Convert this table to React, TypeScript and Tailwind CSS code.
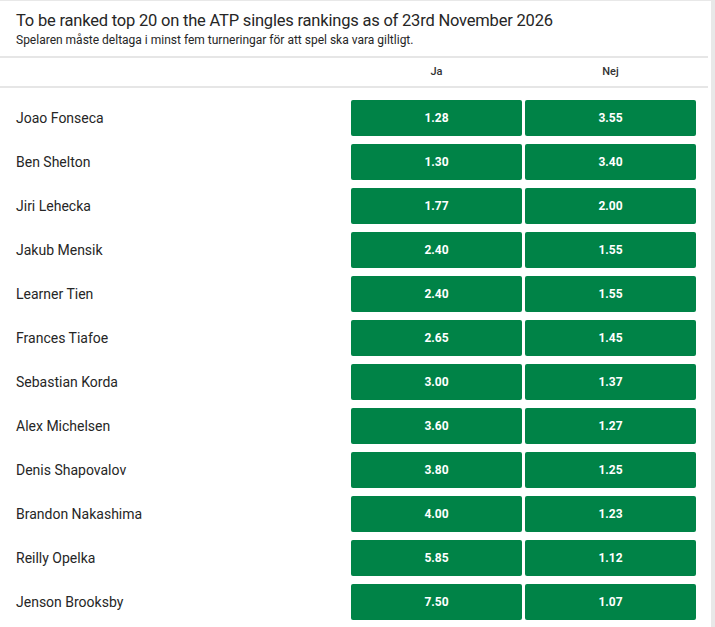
const rows: [string, string, string][] = [
  ['Joao Fonseca', '1.28', '3.55'],
  ['Ben Shelton', '1.30', '3.40'],
  ['Jiri Lehecka', '1.77', '2.00'],
  ['Jakub Mensik', '2.40', '1.55'],
  ['Learner Tien', '2.40', '1.55'],
  ['Frances Tiafoe', '2.65', '1.45'],
  ['Sebastian Korda', '3.00', '1.37'],
  ['Alex Michelsen', '3.60', '1.27'],
  ['Denis Shapovalov', '3.80', '1.25'],
  ['Brandon Nakashima', '4.00', '1.23'],
  ['Reilly Opelka', '5.85', '1.12'],
  ['Jenson Brooksby', '7.50', '1.07'],
];

function OddsButton({value}: {value: string}) {
  return (
    <button
      type="button"
      className="flex h-9 w-[171px] items-center justify-center rounded-[2px] bg-[#008347] text-[12px] font-bold text-white"
    >
      {value}
    </button>
  );
}

export default function App() {
  return (
    <div className="min-h-[627px] w-[715px] bg-[#e8e8e8] pt-px font-['Roboto',sans-serif]">
      <div className="min-h-[626px] w-[711px] bg-white">
        <div className="w-[708px]">
          <div className="h-[55px] px-4 pt-[10px]">
            <h2 className="text-[16.5px] leading-[20px] tracking-[-0.2px] text-[#262626]">
              To be ranked top 20 on the ATP singles rankings as of 23rd November 2026
            </h2>
            <p className="mt-[1px] text-[12px] leading-[16px] text-[#262626]">
              Spelaren måste deltaga i minst fem turneringar för att spel ska vara giltligt.
            </p>
          </div>
          <div className="flex h-[32px] items-center border-y-2 border-[#e6e6e6] text-[11px] font-medium text-[#333]">
            <div className="w-[351px]" />
            <div className="w-[171px] text-center">Ja</div>
            <div className="w-[3px]" />
            <div className="w-[171px] text-center">Nej</div>
          </div>
          <div className="pt-2">
            {rows.map(([name, ja, nej]) => (
              <div key={name} className="flex h-11 items-center">
                <div className="w-[351px] pl-4 text-[14px] text-[#262626]">{name}</div>
                <div className="flex gap-[3px]">
                  <OddsButton value={ja} />
                  <OddsButton value={nej} />
                </div>
              </div>
            ))}
          </div>
        </div>
      </div>
    </div>
  );
}
